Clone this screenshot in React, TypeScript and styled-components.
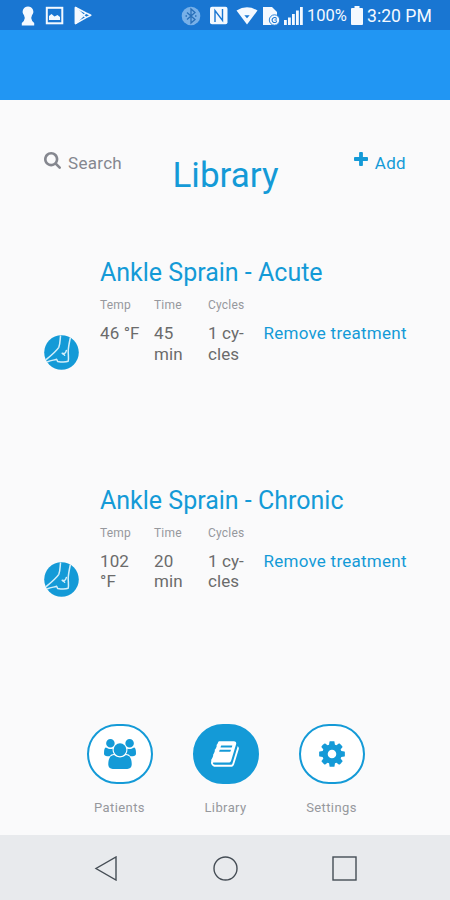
import React from "react";
import styled, { createGlobalStyle } from "styled-components";

const BLUE = "#149ad7";

const GlobalStyle = createGlobalStyle`
  * { box-sizing: border-box; }
  body { margin: 0; background: #fafafb; font-family: Roboto, "Liberation Sans", sans-serif; }
  svg { display: block; flex: none; }
`;

const Screen = styled.div`
  width: 450px;
  height: 900px;
  display: flex;
  flex-direction: column;
  background: #fafafb;
  overflow: hidden;
`;

const StatusBar = styled.header`
  height: 30px;
  flex: none;
  background: #1976d2;
  color: #f4f9ff;
  display: flex;
  align-items: center;
  justify-content: space-between;
  padding: 1px 18px 0 21px;
`;

const StatusGroup = styled.div<{ $gap: number }>`
  display: flex;
  align-items: center;
  gap: ${(p) => p.$gap}px;
`;

const StatusText = styled.span<{ $size: number; $width: number }>`
  font-size: ${(p) => p.$size}px;
  width: ${(p) => p.$width}px;
  line-height: 20px;
  white-space: nowrap;
  margin-top: 1px;
`;

const AppBar = styled.div`
  height: 70px;
  flex: none;
  background: #2196f3;
`;

const Main = styled.main`
  flex: 1;
  display: flex;
  flex-direction: column;
`;

const TitleRow = styled.div`
  display: grid;
  grid-template-columns: 1fr auto 1fr;
  height: 156px;
  padding: 50px 44px 0;
`;

const HeaderAction = styled.button<{ $color: string; $end?: boolean }>`
  display: flex;
  align-items: flex-start;
  justify-content: ${(p) => (p.$end ? "flex-end" : "flex-start")};
  gap: 7px;
  height: 26px;
  padding: 2px 0 0;
  border: 0;
  background: none;
  color: ${(p) => p.$color};
  font: 400 17px/22px Roboto, sans-serif;
  letter-spacing: 0.3px;
`;

const Title = styled.h1`
  margin: 5px 0 0;
  padding-left: 1px;
  color: ${BLUE};
  font-size: 35px;
  line-height: 42px;
  font-weight: 400;
`;

const Treatment = styled.article`
  height: 227.5px;
  padding-left: 44px;
  display: grid;
  grid-template-columns: 56px 1fr;
`;

const Badge = styled.div`
  margin-top: 78.5px;
`;

const TreatmentName = styled.h2`
  margin: 2px 0 0;
  color: ${BLUE};
  font-size: 25px;
  line-height: 30px;
  font-weight: 400;
  white-space: nowrap;
`;

const Facts = styled.div`
  display: grid;
  grid-template-columns: 54px 54px 55.5px auto;
  margin-top: 10px;
`;

const Fact = styled.div`
  display: flex;
  flex-direction: column;
  gap: 11px;
`;

const FactLabel = styled.span`
  color: #96989d;
  font-size: 12px;
  line-height: 14px;
  letter-spacing: 0.2px;
`;

const FactValue = styled.span`
  color: #6b6b6b;
  font-size: 17px;
  line-height: 20.5px;
  letter-spacing: 0.1px;
  white-space: pre-line;
`;

const RemoveButton = styled.button`
  align-self: start;
  justify-self: start;
  margin-top: 25px;
  padding: 0;
  border: 0;
  background: none;
  color: ${BLUE};
  font: 400 17px/20.5px Roboto, sans-serif;
  letter-spacing: 0.25px;
  white-space: nowrap;
`;

const TabBar = styled.nav`
  height: 111px;
  margin-top: auto;
  display: flex;
  justify-content: center;
  gap: 40px;
  padding-left: 1px;
`;

const Tab = styled.button`
  width: 66px;
  display: flex;
  flex-direction: column;
  align-items: center;
  gap: 16px;
  padding: 0;
  border: 0;
  background: none;
  color: #96989d;
  font: 400 13px/16px Roboto, sans-serif;
  letter-spacing: 0.4px;
`;

const TabDisc = styled.span<{ $active?: boolean }>`
  width: 66px;
  height: 60px;
  display: flex;
  align-items: center;
  justify-content: center;
  border: 2px solid ${BLUE};
  border-radius: 31px;
  background: ${(p) => (p.$active ? BLUE : "#ffffff")};
  color: ${(p) => (p.$active ? "#ffffff" : BLUE)};
`;

const SystemNav = styled.footer`
  height: 65px;
  flex: none;
  background: #e8eaed;
  display: flex;
  align-items: center;
  justify-content: center;
  gap: 94px;
  padding-top: 1px;
`;

const Glyph = ({ d, w, h, box = "0 0 1792 1792" }: { d: string; w: number; h: number; box?: string }) => (
  <svg width={w} height={h} viewBox={box} fill="currentColor">
    <path d={d} />
  </svg>
);

const SEARCH =
  "M1216 832q0-185-131.500-316.500t-316.500-131.500-316.500 131.500-131.500 316.500 131.500 316.500 316.500 131.500 316.500-131.500 131.500-316.500zm512 832q0 52-38 90t-90 38q-54 0-90-38l-343-342q-179 124-399 124-143 0-273.500-55.500t-225-150-150-225-55.500-273.500 55.500-273.500 150-225 225-150 273.500-55.500 273.500 55.500 225 150 150 225 55.500 273.500q0 220-124 399l343 343q37 37 37 90z";
const PLUS =
  "M1600 736v192q0 40-28 68t-68 28h-416v416q0 40-28 68t-68 28h-192q-40 0-68-28t-28-68v-416h-416q-40 0-68-28t-28-68v-192q0-40 28-68t68-28h416v-416q0-40 28-68t68-28h192q40 0 68 28t28 68v416h416q40 0 68 28t28 68z";
const USERS =
  "M593 896q-162 5-265 128h-134q-82 0-138-40.500t-56-118.500q0-353 124-353 6 0 43.500 21t97.500 42.500 119 21.500q67 0 133-23-5 37-5 66 0 139 81 256zm1071 637q0 120-73 189.500t-194 69.500h-874q-121 0-194-69.500t-73-189.500q0-53 3.500-103.500t14-109 26.500-108.500 43-97.500 62-81 85.500-53.500 111.500-20q10 0 43 21.500t73 48 107 48 135 21.500 135-21.500 107-48 73-48 43-21.500q61 0 111.500 20t85.500 53.500 62 81 43 97.500 26.500 108.500 14 109 3.500 103.500zm-1024-1277q0 106-75 181t-181 75-181-75-75-181 75-181 181-75 181 75 75 181zm704 384q0 159-112.500 271.500t-271.500 112.500-271.500-112.500-112.500-271.500 112.500-271.500 271.500-112.500 271.500 112.500 112.500 271.500zm576 225q0 78-56 118.500t-138 40.500h-134q-103-123-265-128 81-117 81-256 0-29-5-66 66 23 133 23 59 0 119-21.500t97.500-42.500 43.500-21q124 0 124 353zm-128-609q0 106-75 181t-181 75-181-75-75-181 75-181 181-75 181 75 75 181z";
const BOOK =
  "M1639 478q40 57 18 129l-275 906q-19 64-76.500 107.500t-122.500 43.500h-923q-77 0-148.500-53.500t-99.500-131.500q-24-67-2-127 0-4 3-27t4-37q1-8-3-21.500t-3-19.500q2-11 8-21t16.500-23.500 16.500-23.500q23-38 45-91.500t30-91.500q3-10 .5-30t-.5-28q3-11 17-28t17-23q21-36 42-92t25-90q1-9-2.500-32t.5-28q4-13 22-30.500t22-22.500q19-26 42.500-84.500t27.500-96.500q1-8-3-25.500t-2-26.500q2-8 9-18t18-23 17-21q8-12 16.500-30.500t15-35 16-36 19.500-32 26.500-23.500 36-11.500 47.500 5.500l-1 3q38-9 51-9h761q74 0 114 56t18 130l-274 906q-36 119-71.500 153.500t-128.500 34.500h-869q-27 0-38 15-11 16-1 43 24 70 144 70h923q29 0 56-15.500t35-41.500l300-987q7-22 5-57 38 15 59 43zm-1064 2q-4 13 2 22.500t20 9.500h608q13 0 25.500-9.500t16.500-22.500l21-64q4-13-2-22.500t-20-9.500h-608q-13 0-25.500 9.500t-16.500 22.500zm-83 256q-4 13 2 22.500t20 9.500h608q13 0 25.500-9.500t16.500-22.500l21-64q4-13-2-22.500t-20-9.500h-608q-13 0-25.500 9.500t-16.500 22.500z";
const COG =
  "M1152 896q0-106-75-181t-181-75-181 75-75 181 75 181 181 75 181-75 75-181zm512-109v222q0 12-8 23t-20 13l-185 28q-19 54-39 91 35 50 107 138 10 12 10 25t-9 23q-27 37-99 108t-94 71q-12 0-26-9l-138-108q-44 23-91 38-16 136-29 186-7 28-36 28h-222q-14 0-24.500-8.500t-11.500-21.500l-28-184q-49-16-90-37l-141 107q-10 9-25 9-14 0-25-11-126-114-165-168-7-10-7-23 0-12 8-23 15-21 51-66.500t54-70.500q-27-50-41-99l-183-27q-13-2-21-12.500t-8-23.500v-222q0-12 8-23t19-13l186-28q14-46 39-92-40-57-107-138-10-12-10-24 0-10 9-23 26-36 98.500-107.500t94.500-71.500q13 0 26 10l138 107q44-23 91-38 16-136 29-186 7-28 36-28h222q14 0 24.500 8.500t11.500 21.500l28 184q49 16 90 37l142-107q9-9 24-9 13 0 25 10 129 119 165 170 7 8 7 22 0 12-8 23-15 21-51 66.500t-54 70.500q26 50 41 98l183 28q13 2 21 12.500t8 23.500z";

const FootIcon = () => (
  <svg width="35" height="35" viewBox="0 0 35 35" fill="none" stroke="#d4effa" strokeWidth="1.500" strokeLinejoin="round" strokeLinecap="round">
    <circle cx="17.500" cy="17.500" r="17.300" fill={BLUE} stroke="none" />
    <path d="M16.500 1.200C16 5 16.200 9 14.800 12.300C12 16.500 7 20.500 2.300 24.400" />
    <path d="M26.300 3C25.200 8 24.400 12 24.200 16C24.200 20 24.900 23 24.200 26.200C21 27.400 17 27 13.600 26.400L12.600 24.300C10 25.200 7 25.300 3.600 26.800" />
    <path d="M22.300 15.600C21.600 18.500 20 19 18.200 18.300C19.200 19.300 20 19.600 20.600 20.200" />
  </svg>
);

const LeftStatusIcons = () => (
  <StatusGroup $gap={10}>
    <svg width="14" height="20" viewBox="0 0 14 20" fill="currentColor">
      <path d="M7 .5a5.300 5.300 0 0 0-4 8.800L3.800 12 2.800 15 .8 17v2.500h12.400V17l-2-2L10.200 12 11 9.300A5.300 5.300 0 0 0 7 .5z" />
    </svg>
    <svg width="19" height="19" viewBox="0 0 19 19" fill="none">
      <rect x="1.800" y="1.800" width="15.500" height="15.500" stroke="currentColor" strokeWidth="2" />
      <path d="M4 14V10l2.500-2 3 2.500 3-1.500L15 11v3z" fill="currentColor" />
    </svg>
    <svg width="18" height="19" viewBox="0 0 18 19" fill="none" stroke="currentColor" strokeWidth="1.500" strokeLinejoin="round">
      <path d="M1.500 1.500v16L12 11.600l4.800-2.300L12 7z" />
      <path d="M1.500 1.500L12 11.600M1.500 17.500L12 7" />
      <path d="M1.500 1.500v16L8 9.500z" fill="currentColor" />
    </svg>
  </StatusGroup>
);

const RightStatusIcons = () => (
  <StatusGroup $gap={4}>
    <svg width="20" height="20" viewBox="0 0 20 20" fill="none">
      <circle cx="10" cy="10" r="9.300" fill="#78b0e8" />
      <path d="M6 6.500l8 7-4 3.500V3l4 3.500-8 7" stroke="#286fb8" strokeWidth="1.300" />
      <path d="M4.500 10h1.500M14 10h1.500" stroke="#286fb8" strokeWidth="1.500" />
    </svg>
    <svg width="27" height="19" viewBox="-4 0 27 19" fill="none">
      <rect x="1" y=".8" width="17.500" height="17.500" rx="2" fill="currentColor" />
      <path d="M6 16V4.500L13.500 14.500V3" stroke="#1976d2" strokeWidth="1.400" />
    </svg>
    <svg width="22" height="19" viewBox="0 0 22 19">
      <path d="M.5 4.500Q11-2 21.500 4.500L11 18.500z" fill="currentColor" />
      <path d="M8.300 9.300h5.400L11 12.300z" fill="#1976d2" />
    </svg>
    <svg width="18" height="20" viewBox="0 0 18 20">
      <path d="M1 1h9l5 5v13H1z" fill="currentColor" />
      <circle cx="12.500" cy="14" r="5.200" fill="currentColor" stroke="#1976d2" strokeWidth=".9" />
      <path d="M14.600 12.600a2.500 2.500 0 1 0 .2 2.600M12.500 14h2.500" fill="none" stroke="#1976d2" strokeWidth="1.100" />
    </svg>
    <svg width="19" height="19" viewBox="0 0 19 19" fill="currentColor">
      <path d="M0 14h2.800v5H0zM4 11.500h2.800V19H4zM8 8h2.800v11H8zM12 4.500h2.800V19H12zM16 1h2.800v18H16z" />
    </svg>
    <StatusText $size={16.500} $width={40}>100%</StatusText>
    <svg width="12" height="19" viewBox="0 0 12 19" fill="currentColor">
      <path d="M3.500 0h5v2H11q1 0 1 1v15q0 1-1 1H1q-1 0-1-1V3q0-1 1-1h2.500z" />
    </svg>
    <StatusText $size={17.600} $width={65}>3:20 PM</StatusText>
  </StatusGroup>
);

const treatments = [
  { name: "Ankle Sprain - Acute", temp: "46 °F", time: "45\nmin" },
  { name: "Ankle Sprain - Chronic", temp: "102\n°F", time: "20\nmin" },
];

export default function App() {
  return (
    <Screen>
      <GlobalStyle />
      <StatusBar>
        <LeftStatusIcons />
        <RightStatusIcons />
      </StatusBar>
      <AppBar />
      <Main>
        <TitleRow>
          <HeaderAction $color="#85878f">
            <Glyph d={SEARCH} w={17} h={17} box="64 128 1664 1664" />
            Search
          </HeaderAction>
          <Title>Library</Title>
          <HeaderAction $color={BLUE} $end>
            <Glyph d={PLUS} w={14} h={14} box="192 128 1408 1408" />
            Add
          </HeaderAction>
        </TitleRow>
        {treatments.map((t) => (
          <Treatment key={t.name}>
            <Badge>
              <FootIcon />
            </Badge>
            <div>
              <TreatmentName>{t.name}</TreatmentName>
              <Facts>
                <Fact>
                  <FactLabel>Temp</FactLabel>
                  <FactValue>{t.temp}</FactValue>
                </Fact>
                <Fact>
                  <FactLabel>Time</FactLabel>
                  <FactValue>{t.time}</FactValue>
                </Fact>
                <Fact>
                  <FactLabel>Cycles</FactLabel>
                  <FactValue>{"1 cy-\ncles"}</FactValue>
                </Fact>
                <RemoveButton>Remove treatment</RemoveButton>
              </Facts>
            </div>
          </Treatment>
        ))}
        <TabBar>
          <Tab>
            <TabDisc>
              <Glyph d={USERS} w={32} h={30} box="0 0 1920 1792" />
            </TabDisc>
            Patients
          </Tab>
          <Tab>
            <TabDisc $active>
              <Glyph d={BOOK} w={30} h={30} />
            </TabDisc>
            Library
          </Tab>
          <Tab>
            <TabDisc>
              <Glyph d={COG} w={30} h={30} />
            </TabDisc>
            Settings
          </Tab>
        </TabBar>
      </Main>
      <SystemNav>
        <svg width="25" height="25" viewBox="0 0 25 25" fill="none" stroke="#454d55" strokeWidth="1.400">
          <path d="M22 1v23L2 12.500z" />
        </svg>
        <svg width="25" height="25" viewBox="0 0 25 25" fill="none" stroke="#454d55" strokeWidth="1.400">
          <circle cx="12.500" cy="12.500" r="11.500" />
        </svg>
        <svg width="25" height="25" viewBox="0 0 25 25" fill="none" stroke="#454d55" strokeWidth="1.400">
          <rect x="1" y="1" width="23" height="23" />
        </svg>
      </SystemNav>
    </Screen>
  );
}
